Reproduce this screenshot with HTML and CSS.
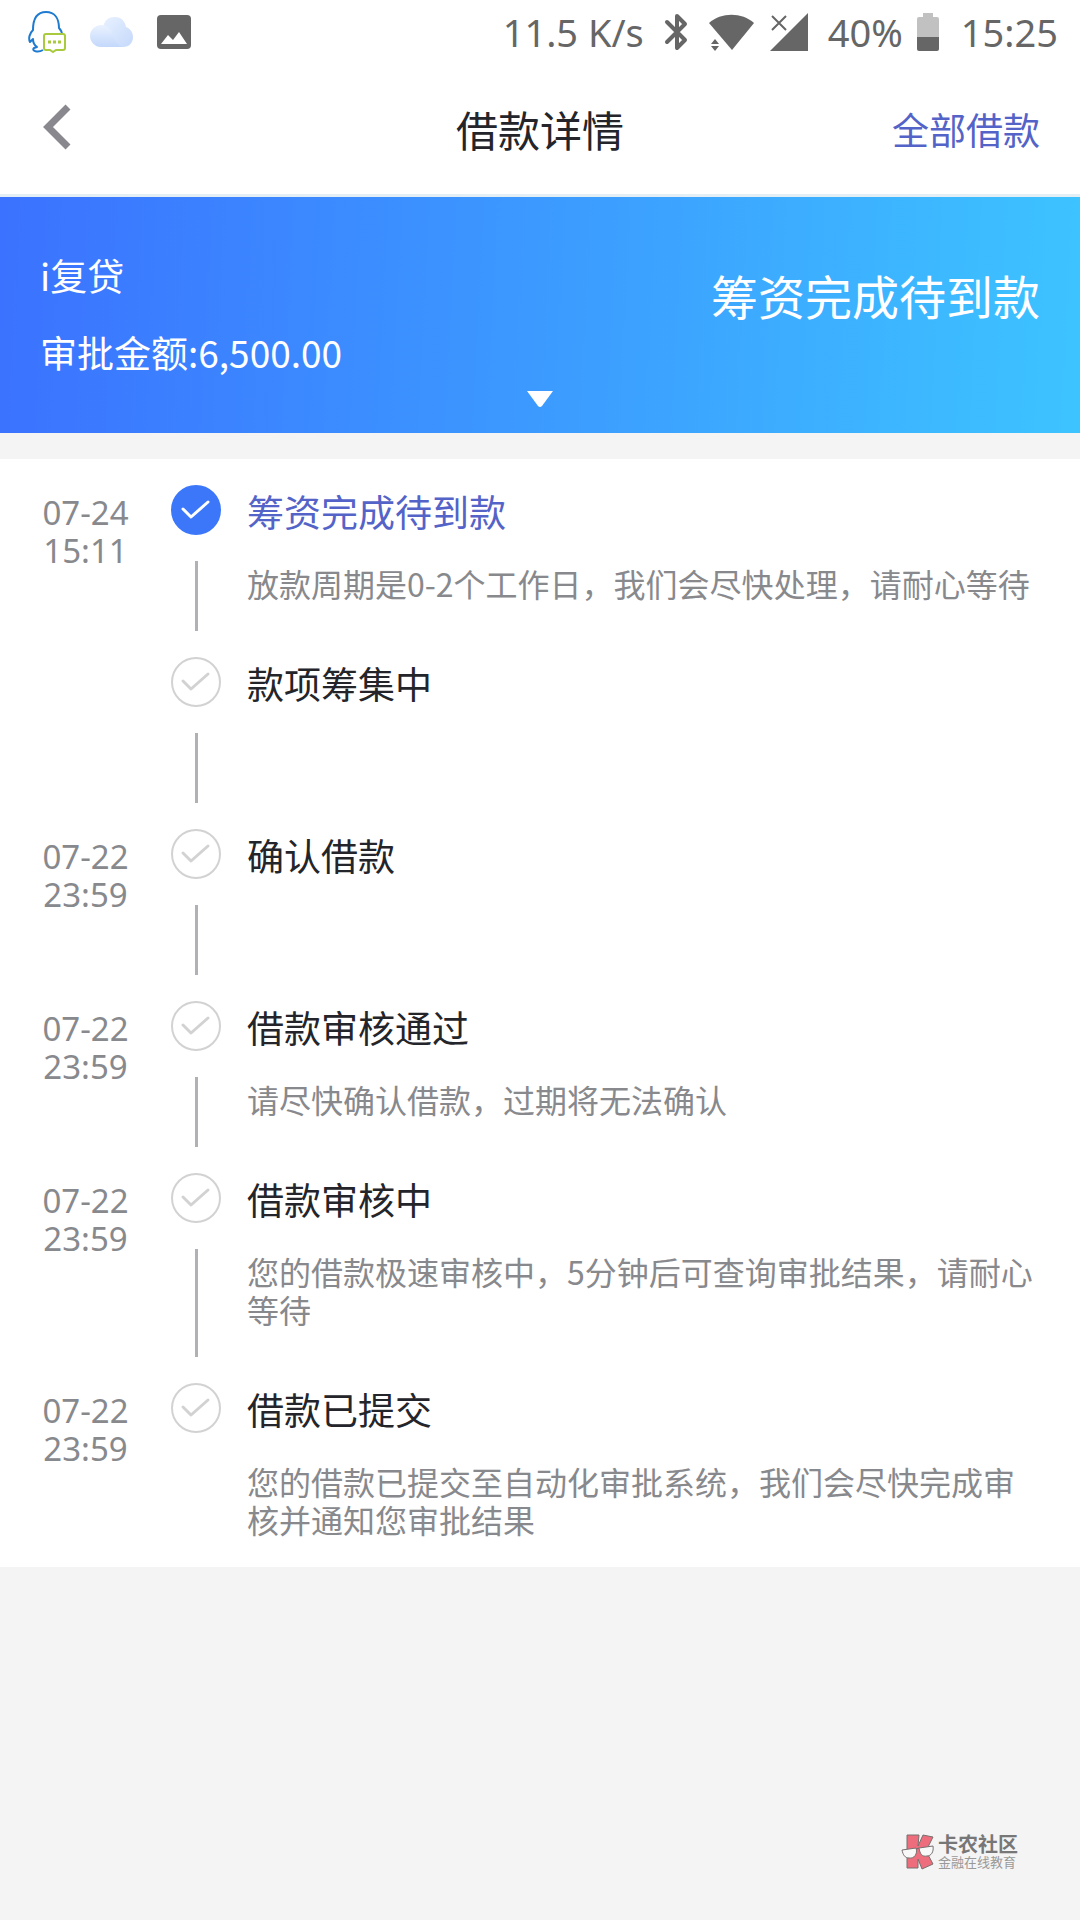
FILE: index.html
```html
<!DOCTYPE html>
<html lang="zh-CN">
<head>
<meta charset="UTF-8" />
<meta name="viewport" content="width=device-width, initial-scale=1" />
<title>借款详情</title>
<link rel="stylesheet" href="styles.css">
</head>
<body>
<!-- shared check mark for every step -->
<svg class="defs" width="0" height="0" aria-hidden="true">
  <symbol id="check" viewBox="0 0 50 50">
    <circle cx="25" cy="25" r="24" />
    <path d="M12 24L20 32L37 17" />
  </symbol>
</svg>

<div class="status-bar">
  <div class="status-left">
    <svg width="38" height="44" viewBox="0 0 38 44" fill="none">
      <path d="M15 40C10 43 3 41 6 38L9 37C6 35 5 32 5 29L2 32C0 28 2 23 5 20C5 8 9 2 18 2S31 9 31 18C33 20 34 22 34 25" stroke="#1f7bd0" stroke-width="2" stroke-linejoin="round" />
      <path d="M18 24H35Q37 24 37 26V38Q37 40 35 40H28L25 42L22 40H18Q16 40 16 38V26Q16 24 18 24Z" fill="#fff" stroke="#a9ca3f" stroke-width="2" />
      <path d="M20 32h3M25 32h3M30 32h3" stroke="#a9ca3f" stroke-width="3" />
    </svg>
    <svg width="43" height="32" viewBox="0 0 43 32">
      <defs>
        <linearGradient id="cloud-front" x1="0" y1="0" x2="0" y2="1"><stop offset="0" stop-color="#eaf2ff" /><stop offset="1" stop-color="#c3d8fb" /></linearGradient>
        <linearGradient id="cloud-back" x1="0" y1="0" x2="1" y2="1"><stop offset="0" stop-color="#e8f1ff" /><stop offset="1" stop-color="#c5d9fb" /></linearGradient>
      </defs>
      <path d="M13 12C14 4 19 1 25 1C31 1 35 5 36 11C41 13 43 17 43 21C43 27 39 31 33 31H20Z" fill="url(#cloud-back)" />
      <path d="M11 31C5 31 0 26 0 20S5 9 11 9C17 9 21 13 22 17C24 24 28 30 34 31Z" fill="url(#cloud-front)" />
    </svg>
    <svg width="34" height="34" viewBox="0 0 34 34">
      <rect width="34" height="34" rx="4" fill="#666" />
      <path d="M4 29L11 20L16 25L22 17L30 29Z" fill="#fff" />
    </svg>
  </div>
  <div class="status-right">
    <span>11.5 K/s</span>
    <svg class="bluetooth" width="24" height="38" viewBox="0 0 24 38" fill="none" stroke="#666" stroke-width="4" stroke-linejoin="round" stroke-linecap="round">
      <path d="M3 9L21 27L13 35V3L21 11L3 29" />
    </svg>
    <svg class="wifi" width="46" height="38" viewBox="0 0 46 38" fill="#666">
      <path d="M1 10C13-1 34-1 46 10L24 37Z" />
      <path d="M3 31L7 26L11 31ZM3 33H11L7 38Z" />
    </svg>
    <svg class="signal" width="38" height="38" viewBox="0 0 38 38">
      <path d="M38 0V38H0Z" fill="#666" />
      <path d="M2 3L16 17M16 3L2 17" stroke="#666" stroke-width="2" />
    </svg>
    <span>40%</span>
    <svg class="battery" width="22" height="38" viewBox="0 0 22 38">
      <path d="M6 0H16V4H20Q22 4 22 6V25H0V6Q0 4 2 4H6Z" fill="#c1c1c1" />
      <path d="M0 24H22V36Q22 38 20 38H2Q0 38 0 36Z" fill="#666" />
    </svg>
    <span>15:25</span>
  </div>
</div>

<header class="nav">
  <button class="back" type="button" aria-label="返回">
    <svg width="28" height="46" viewBox="0 0 28 46" fill="none"><path d="M25 3L5 23L25 43" stroke="#88888e" stroke-width="7" /></svg>
  </button>
  <h1>借款详情</h1>
  <a class="all-loans" href="#">全部借款</a>
</header>

<section class="banner">
  <div class="banner-row">
    <div>
      <div class="loan-name">i复贷</div>
      <div class="loan-amount">审批金额:6,500.00</div>
    </div>
    <div class="loan-status">筹资完成待到款</div>
  </div>
  <button class="expand" type="button" aria-label="展开">
    <svg width="26" height="17" viewBox="0 0 26 17"><path d="M0 0H26L15 15Q13 17 11 15Z" fill="#fff" /></svg>
  </button>
</section>

<main>
  <ol class="timeline">
    <li class="step current">
      <time>07-24 15:11</time>
      <div class="marker"><svg><use href="#check" /></svg></div>
      <div class="info">
        <h2>筹资完成待到款</h2>
        <p>放款周期是0-2个工作日，我们会尽快处理，请耐心等待</p>
      </div>
    </li>
    <li class="step">
      <time></time>
      <div class="marker"><svg><use href="#check" /></svg></div>
      <div class="info"><h2>款项筹集中</h2></div>
    </li>
    <li class="step">
      <time>07-22 23:59</time>
      <div class="marker"><svg><use href="#check" /></svg></div>
      <div class="info"><h2>确认借款</h2></div>
    </li>
    <li class="step">
      <time>07-22 23:59</time>
      <div class="marker"><svg><use href="#check" /></svg></div>
      <div class="info">
        <h2>借款审核通过</h2>
        <p>请尽快确认借款，过期将无法确认</p>
      </div>
    </li>
    <li class="step">
      <time>07-22 23:59</time>
      <div class="marker"><svg><use href="#check" /></svg></div>
      <div class="info">
        <h2>借款审核中</h2>
        <p>您的借款极速审核中，5分钟后可查询审批结果，请耐心等待</p>
      </div>
    </li>
    <li class="step">
      <time>07-22 23:59</time>
      <div class="marker"><svg><use href="#check" /></svg></div>
      <div class="info">
        <h2>借款已提交</h2>
        <p>您的借款已提交至自动化审批系统，我们会尽快完成审核并通知您审批结果</p>
      </div>
    </li>
  </ol>
</main>

<footer class="community">
  <svg width="34" height="36" viewBox="0 0 34 36" stroke="#77706f" stroke-width="1">
    <path d="M6 1H18L17 12L22 1L32 3L25 17L32 30L21 35L17 25V34H6Z" fill="#ee6d7d" />
    <path d="M1 16L15 14C17 20 13 25 8 24C4 24 2 21 1 16ZM18 14L32 12C33 18 30 22 26 22C21 23 19 20 18 14Z" fill="#f8f8f8" />
    <path d="M15 15L18 14" />
  </svg>
  <div>
    <div class="community-name">卡农社区</div>
    <div class="community-sub">金融在线教育</div>
  </div>
</footer>
</body>
</html>
```
FILE: styles.css
```css
* { box-sizing: border-box; }
body {
  margin: 0; background: #f4f4f4; color: #24252a;
  font-family: "Noto Sans CJK SC", "Noto Sans", sans-serif;
  display: flex; flex-direction: column; min-height: 100vh;
}
svg { display: block; flex: none; }
button { border: none; background: none; padding: 0; cursor: pointer; }
h1, h2, p, ol { margin: 0; padding: 0; font-weight: 400; }
.defs { position: absolute; }

/* system status bar */
.status-bar {
  background: #fff; height: 64px; padding: 0 22px 0 28px;
  display: flex; justify-content: space-between; align-items: center;
  font-family: "Noto Sans", sans-serif; font-size: 38px; line-height: 40px; color: #666;
}
.status-left { display: flex; align-items: center; gap: 24px; }
.status-right { display: flex; align-items: center; }
.bluetooth { margin-left: 20px; }
.wifi { margin-left: 20px; }
.signal { margin-left: 16px; margin-right: 20px; }
.battery { margin-left: 14px; margin-right: 22px; }

/* title bar */
.nav {
  background: #fff; height: 133px; padding: 0 40px; border-bottom: 3px solid #e4eef5;
  display: grid; grid-template-columns: 1fr auto 1fr; align-items: center;
}
.back { justify-self: start; padding: 0 3px 4px; }
.nav h1 { font-size: 42px; line-height: 54px; }
.all-loans { justify-self: end; font-size: 37px; line-height: 54px; color: #5463c8; text-decoration: none; }

/* loan summary */
.banner {
  background: linear-gradient(93deg, #3b72ff, #3c9aff 50%, #3dc4ff);
  color: #fff; padding: 51px 40px 25px; margin-bottom: 26px;
}
.banner-row { display: flex; justify-content: space-between; }
.loan-name, .loan-amount { font-size: 37px; line-height: 54px; }
.loan-amount { margin-top: 23px; }
.loan-status { font-size: 47px; line-height: 94px; }
.expand { display: block; margin: 12px auto 0; }

/* progress timeline */
main { background: #fff; }
.timeline { list-style: none; padding: 26px 40px 0 0; }
.step { display: flex; margin-bottom: 26px; min-height: 146px; }
.step:last-child { margin-bottom: 0; }
time {
  width: 171px; flex: none; padding: 9px 30px 0; text-align: center;
  font-family: "Noto Sans", sans-serif; font-size: 33px; line-height: 38px; color: #88898d;
}
.marker { width: 50px; flex: none; display: flex; flex-direction: column; align-items: center; color: #d2d2d2; }
.marker svg { width: 50px; height: 50px; fill: none; stroke: #d2d2d2; stroke-width: 2; }
.marker::after { content: ""; flex: 1; width: 3px; margin-top: 26px; background: #b0b1b4; }
.step:last-child .marker::after { display: none; }
#check path { fill: none; stroke: currentColor; stroke-width: 3; stroke-linecap: round; stroke-linejoin: round; }
.current .marker { color: #fff; }
.current .marker svg { fill: #3c77fa; stroke: #3c77fa; }
.info { flex: 1; margin-left: 26px; padding-bottom: 29px; }
.info h2 { font-size: 37px; line-height: 52px; }
.current h2 { color: #5463c8; }
.info p { margin-top: 27px; font-size: 32px; line-height: 38px; color: #88898d; }

/* community mark */
.community { margin: auto 62px 50px auto; padding-top: 40px; display: flex; align-items: center; gap: 3px; }
.community-name { font-size: 20px; line-height: 20px; font-weight: 700; color: #777; }
.community-sub { font-size: 13px; line-height: 16px; color: #999; }
```
